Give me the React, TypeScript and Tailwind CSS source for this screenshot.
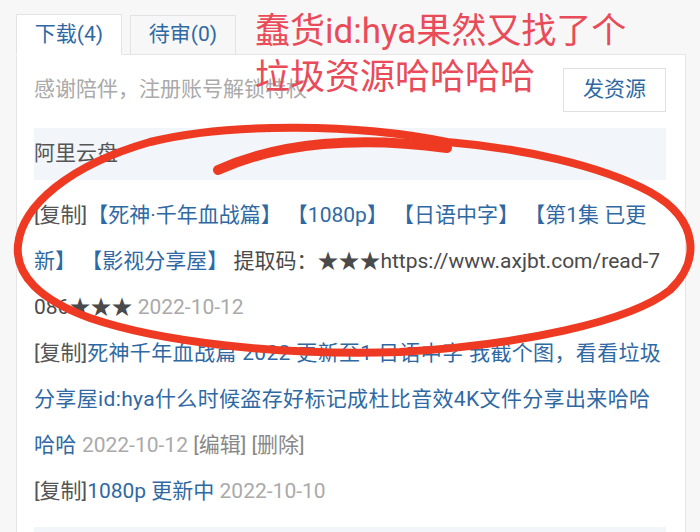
import React from "react";

const Copy = () => <span className="text-[#555]">[复制]</span>;

const App = () => {
    return (
        <div
            className="relative w-[700px] h-[532px] overflow-hidden bg-[#f7f7f7] pl-4 pt-[14px] text-[21px]"
            style={{ fontFamily: "Roboto, 'Noto Sans CJK SC', sans-serif" }}
        >
            <div className="w-[670px]">
                {/* Tabs */}
                <div className="flex items-end gap-2">
                    <div className="relative z-10 -mb-px flex h-[41px] w-[106px] items-center justify-center border border-b-white border-[#e3e3e3] bg-white text-[#2f69a3]">
                        下载(4)
                    </div>
                    <div className="flex h-[39px] w-[106px] items-center justify-center border border-b-0 border-[#e3e3e3] bg-[#f7f7f7] text-[#2f69a3]">
                        待审(0)
                    </div>
                </div>

                {/* Panel */}
                <div className="border border-[#e5e5e5] bg-white pl-[17px] pr-[19px] pt-[13px]">
                    <div className="flex items-center justify-between">
                        <span className="text-[#aaa]">感谢陪伴，注册账号解锁特权</span>
                        <button className="h-[44px] w-[103px] border border-[#e0e0e0] bg-white text-[#2f69a3]">
                            发资源
                        </button>
                    </div>

                    <div className="mt-4 flex h-[52px] items-center bg-[#f2f5f9] text-[#555]">阿里云盘</div>

                    <div className="pt-3 leading-[46px] break-all">
                        <p>
                            <Copy />
                            <span className="text-[#2f69a3]">
                                【死神·千年血战篇】 【1080p】 【日语中字】 【第1集 已更新】 【影视分享屋】
                            </span>
                            <span className="text-[#4a4a4a]"> 提取码：★★★https://www.axjbt.com/read-7086★★★</span>
                            <span className="text-[#aaa]"> 2022-10-12</span>
                        </p>
                        <p>
                            <Copy />
                            <span className="text-[#2f69a3] tracking-[0.35px]">
                                死神千年血战篇 2022 更新至1 日语中字 我截个图，看看垃圾分享屋id:hya什么时候盗存好标记成杜比音效4K文件分享出来哈哈哈哈
                            </span>
                            <span className="text-[#aaa]"> 2022-10-12</span>
                            <span className="text-[#888]"> [编辑] [删除]</span>
                        </p>
                        <p>
                            <Copy />
                            <span className="text-[#2f69a3]">1080p 更新中</span>
                            <span className="text-[#aaa]"> 2022-10-10</span>
                        </p>
                    </div>

                    <div className="mt-[13px] h-[52px] bg-[#f2f5f9]" />
                </div>
            </div>

            {/* Red annotation text */}
            <div className="absolute left-[255px] top-[9px] text-[35px] leading-[46px] text-[#e94b59]">
                <p>蠢货id:hya果然又找了个</p>
                <p>垃圾资源哈哈哈哈</p>
            </div>

            {/* Red hand-drawn circle */}
            <svg className="absolute left-0 top-0" width="700" height="532" viewBox="0 0 700 532" fill="none">
                <path
                    d="M447 142 C520 148 600 165 650 192 C700 220 700 262 670 290 C630 322 520 345 400 352 C280 356 160 342 90 318 C40 300 15 275 18 245 C22 205 70 165 150 142 C230 122 360 124 447 142"
                    stroke="#ee3a22"
                    strokeWidth="8"
                    strokeLinecap="round"
                />
                <path d="M218 170 C280 142 360 136 447 148" stroke="#ee3a22" strokeWidth="10" strokeLinecap="round" />
            </svg>
        </div>
    );
};

export default App;
